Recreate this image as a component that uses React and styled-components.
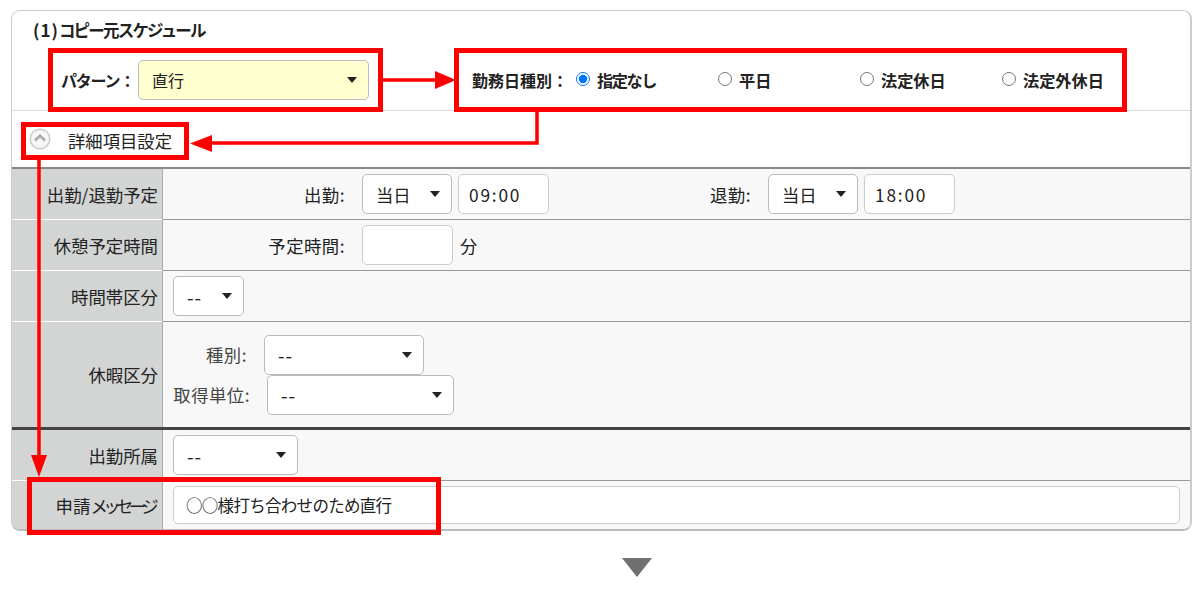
import styled, { createGlobalStyle } from "styled-components";

const GlobalStyle = createGlobalStyle`
  html, body {
    margin: 0;
    padding: 0;
    background: #fff;
  }
  body {
    width: 1203px;
    height: 591px;
    overflow: hidden;
    font-family: "Noto Sans CJK JP", "Liberation Sans", sans-serif;
    color: #222;
  }
`;

const Page = styled.div`
  position: relative;
  width: 1203px;
  height: 591px;
  padding: 10px 11px 0 11px;
  box-sizing: border-box;
`;

const Card = styled.section`
  border: 1px solid #ccc;
  border-right-width: 2px;
  border-bottom: 2px solid #bbb;
  border-radius: 9px;
  overflow: hidden;
  background: #fff;
`;

const Title = styled.h2`
  margin: 0;
  padding: 7px 0 0 21px;
  height: 30px;
  box-sizing: border-box;
  font-size: 16.5px;
  line-height: 24px;
  font-weight: 700;
  letter-spacing: -1.8px;
  color: #222;
`;

const TitleNum = styled.span`
  font-size: 17px;
  letter-spacing: 1px;
`;

const TopBar = styled.div`
  display: flex;
  align-items: center;
  height: 70px;
  padding: 9px 0 0 49px;
  box-sizing: border-box;
  border-bottom: 1px solid #ddd;
`;

const BoldLabel = styled.span`
  flex: none;
  width: ${(p) => p.$w}px;
  font-size: 16px;
  font-weight: 700;
  letter-spacing: ${(p) => p.$ls || 0}px;
  white-space: nowrap;
`;

const RadioGroup = styled.div`
  display: flex;
  align-items: center;
  margin-left: 103px;
`;

const RadioItem = styled.label`
  display: flex;
  align-items: center;
  width: 142px;
  font-size: 16.2px;
  font-weight: 700;
  letter-spacing: ${(p) => p.$ls || 0}px;
  white-space: nowrap;

  input {
    width: 14px;
    height: 14px;
    margin: 0 7px 3px 0;
    accent-color: #0075ff;
  }
`;

const SelectWrap = styled.div`
  position: relative;
  flex: none;
  width: ${(p) => p.$w}px;
  height: 40px;

  &::after {
    content: "";
    position: absolute;
    top: 17px;
    right: 12px;
    border-left: 5px solid transparent;
    border-right: 5px solid transparent;
    border-top: 6px solid #222;
    pointer-events: none;
  }

  select {
    appearance: none;
    width: 100%;
    height: 100%;
    padding: 0 0 0 13px;
    box-sizing: border-box;
    border: 1px solid #bbb;
    border-radius: 5px;
    background: ${(p) => p.$bg || "#fff"};
    font-family: inherit;
    font-size: ${(p) => (p.$bg ? 16 : p.$dash ? 19 : 17.33)}px;
    letter-spacing: ${(p) => (p.$dash ? 1 : 0)}px;
    color: #222;
  }
`;

const Select = ({ w, bg, value }) => (
  <SelectWrap $w={w} $bg={bg} $dash={value === "--"}>
    <select defaultValue={value}>
      <option>{value}</option>
    </select>
  </SelectWrap>
);

const Toggle = styled.div`
  display: flex;
  align-items: center;
  gap: 17px;
  height: 56px;
  padding: 0 0 0 17px;
  box-sizing: border-box;
  font-size: 17.33px;
`;

const ToggleText = styled.span`
  margin-top: 3px;
`;

const Row = styled.div`
  display: grid;
  grid-template-columns: 151px 1fr;
  height: ${(p) => p.$h}px;
  box-sizing: border-box;
  border-top: ${(p) => p.$top || "none"};
`;

const Head = styled.div`
  display: flex;
  align-items: center;
  justify-content: flex-end;
  padding-right: 4px;
  background: #d3d4d4;
  border-bottom: ${(p) => (p.$last ? "none" : "1px solid #fff")};
  border-right: 1px solid #aaa;
  box-sizing: border-box;
  font-size: 17.4px;
  white-space: nowrap;
`;

const Kana = styled.span`
  letter-spacing: -4.6px;
  margin-right: 4px;
`;

const Body = styled.div`
  display: flex;
  align-items: center;
  padding-left: 10px;
  background: #f8f8f8;
  border-bottom: ${(p) => (p.$last ? "none" : "1px solid #999")};
  box-sizing: border-box;
  font-size: 17.33px;
`;

const FieldLabel = styled.span`
  flex: none;
  width: ${(p) => p.$w}px;
  margin-right: 17px;
  text-align: right;
  letter-spacing: 0.5px;
  white-space: nowrap;
`;

const TextInput = styled.input`
  flex: ${(p) => (p.$w ? "none" : "1")};
  min-width: 0;
  width: ${(p) => (p.$w ? `${p.$w}px` : "auto")};
  height: ${(p) => p.$h || 40}px;
  margin-left: ${(p) => p.$ml || 0}px;
  margin-right: ${(p) => p.$mr || 0}px;
  padding: 0 ${(p) => (p.$w ? 10 : 12)}px;
  box-sizing: border-box;
  border: 1px solid #ccc;
  border-radius: 5px;
  background: #fff;
  font-family: inherit;
  font-size: ${(p) => (p.$w ? 17.33 : 16.5)}px;
  letter-spacing: ${(p) => (p.$w ? 1.8 : -0.7)}px;
  color: #222;
`;

const Unit = styled.span`
  margin-left: 7px;
`;

const LeaveGrid = styled.div`
  display: flex;
  flex-direction: column;
`;

const LeaveLine = styled.div`
  display: flex;
  align-items: center;
  color: #444;
`;

const Down = styled.div`
  display: flex;
  justify-content: center;
  padding: 27px 0 0 70px;
`;

const Overlay = styled.svg`
  position: absolute;
  top: 0;
  left: 0;
  pointer-events: none;
`;

const CollapseIcon = () => (
  <svg width="22" height="22" viewBox="0 0 22 22">
    <circle cx="11" cy="11" r="9.8" fill="#f6f6f6" stroke="#cdcdcd" strokeWidth="1.5" />
    <path d="M6 12.5 11 7.8l5 4.7" fill="none" stroke="#aaa" strokeWidth="2.6" />
  </svg>
);

const DownMark = () => (
  <svg width="30" height="19" viewBox="0 0 30 19">
    <path d="M0 0h30L15 19z" fill="#707070" />
  </svg>
);

const Annotations = () => (
  <Overlay width="1203" height="591" viewBox="0 0 1203 591">
    <g fill="none" stroke="#f00" strokeWidth="5">
      <rect x="50.5" y="50.5" width="330" height="59" />
      <rect x="456.5" y="50.5" width="668" height="59" />
      <rect x="23.5" y="124.5" width="163" height="33" />
      <rect x="29.5" y="479.5" width="409" height="53" />
    </g>
    <g fill="none" stroke="#f00" strokeWidth="3.5">
      <path d="M383 80h54" />
      <path d="M537 112v31H210" />
      <path d="M39 160v298" />
    </g>
    <g fill="#f00">
      <path d="M435 71l21 9-21 9z" />
      <path d="M212 135l-22 8.5 22 8.5z" />
      <path d="M31 455h16l-8 22z" />
    </g>
  </Overlay>
);

export default function App() {
  return (
    <Page>
      <GlobalStyle />
      <Card>
        <Title>
          <TitleNum>(1)</TitleNum>コピー元スケジュール
        </Title>
        <TopBar>
          <BoldLabel $w={77} $ls={-1.2}>パターン：</BoldLabel>
          <Select w={231} bg="#ffffd0" value="直行" />
          <RadioGroup>
            <BoldLabel $w={104}>勤務日種別：</BoldLabel>
            <RadioItem $ls={-1.4}>
              <input type="radio" name="kind" defaultChecked />
              指定なし
            </RadioItem>
            <RadioItem>
              <input type="radio" name="kind" />
              平日
            </RadioItem>
            <RadioItem>
              <input type="radio" name="kind" />
              法定休日
            </RadioItem>
            <RadioItem>
              <input type="radio" name="kind" />
              法定外休日
            </RadioItem>
          </RadioGroup>
        </TopBar>
        <Toggle>
          <CollapseIcon />
          <ToggleText>詳細項目設定</ToggleText>
        </Toggle>
        <Row $h={53} $top="2px solid #888">
          <Head>出勤/退勤予定</Head>
          <Body>
            <FieldLabel $w={172}>出勤:</FieldLabel>
            <Select w={90} value="当日" />
            <TextInput $w={91} $ml={6} defaultValue="09:00" />
            <FieldLabel $w={202}>退勤:</FieldLabel>
            <Select w={90} value="当日" />
            <TextInput $w={91} $ml={6} defaultValue="18:00" />
          </Body>
        </Row>
        <Row $h={51}>
          <Head>休憩予定時間</Head>
          <Body>
            <FieldLabel $w={172}>予定時間:</FieldLabel>
            <TextInput $w={91} />
            <Unit>分</Unit>
          </Body>
        </Row>
        <Row $h={51}>
          <Head>時間帯区分</Head>
          <Body>
            <Select w={71} value="--" />
          </Body>
        </Row>
        <Row $h={105}>
          <Head $last>休暇区分</Head>
          <Body $last>
            <LeaveGrid>
              <LeaveLine>
                <FieldLabel $w={74}>種別:</FieldLabel>
                <Select w={160} value="--" />
              </LeaveLine>
              <LeaveLine>
                <FieldLabel $w={77}>取得単位:</FieldLabel>
                <Select w={187} value="--" />
              </LeaveLine>
            </LeaveGrid>
          </Body>
        </Row>
        <Row $h={54} $top="3px solid #444">
          <Head>出勤所属</Head>
          <Body>
            <Select w={125} value="--" />
          </Body>
        </Row>
        <Row $h={48}>
          <Head $last>
            申請<Kana>メッセージ</Kana>
          </Head>
          <Body $last>
            <TextInput $h={38} $mr={10} defaultValue="○○様打ち合わせのため直行" />
          </Body>
        </Row>
      </Card>
      <Down>
        <DownMark />
      </Down>
      <Annotations />
    </Page>
  );
}
